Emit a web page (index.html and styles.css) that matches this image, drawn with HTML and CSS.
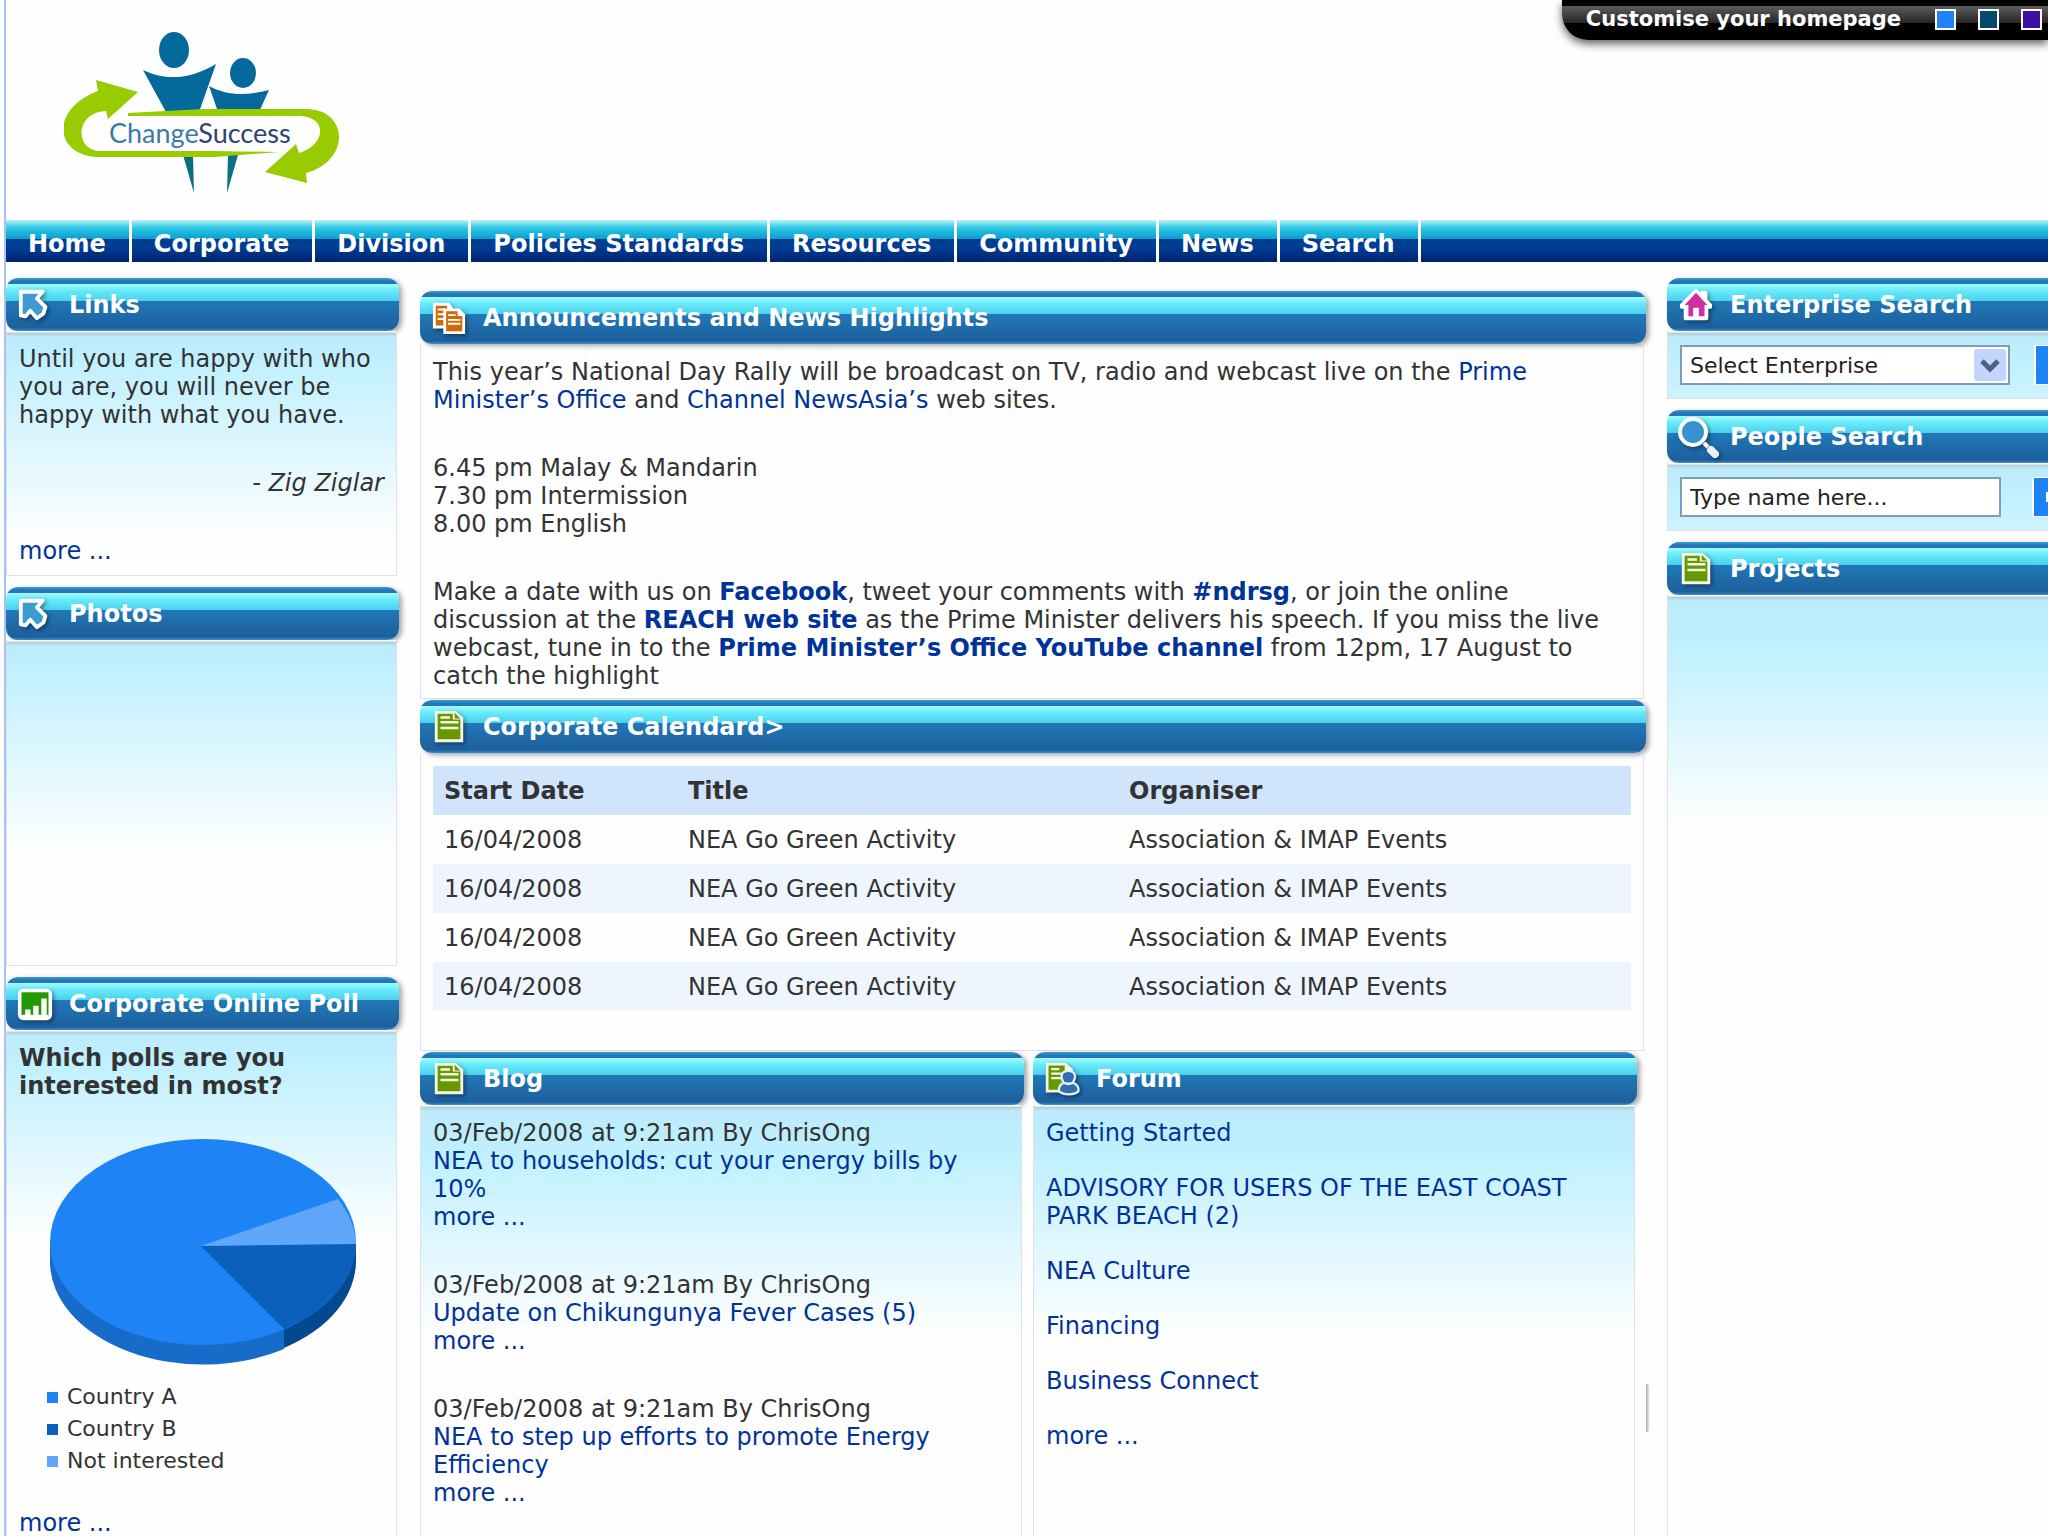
FILE: index.html
```html
<!DOCTYPE html>
<html lang="en">
<head>
<meta charset="utf-8">
<title>ChangeSuccess Intranet</title>
<link rel="stylesheet" href="styles.css">
</head>
<body>
<svg class="defs" width="0" height="0" aria-hidden="true">
  <symbol id="i-arrow" viewBox="0 0 36 38">
    <path d="M3 5H26L20 12L29 21L27 28L20 33L13 25L8 31L3 30Z" fill="#3d9bd0" stroke="#fff" stroke-width="4" stroke-linejoin="round"/>
  </symbol>
  <symbol id="i-doc" viewBox="0 0 36 38">
    <path d="M3 2H25L33 9V35H3Z" fill="#f4f8e8"/>
    <path d="M6 5H22V11H30V32H6Z" fill="#690"/>
    <path d="M24 4L30 10H24Z" fill="#690"/>
    <path d="M9 9H19M9 14H28M9 20H28" stroke="#f4f8e8" stroke-width="2.5"/>
  </symbol>
  <symbol id="i-news" viewBox="0 0 36 38">
    <path d="M1 3H18L22 8V30H1Z" fill="#fff"/>
    <path d="M4 6H16V11H20V27H4Z" fill="#d06a08"/>
    <path d="M6 10H14M6 15H14M6 20H14" stroke="#fff" stroke-width="2"/>
    <path d="M12 9H29L35 15V36H12Z" fill="#fff"/>
    <path d="M15 12H27V17H32V33H15Z" fill="#d06a08"/>
    <path d="M17 16H25M17 21H30M17 25H30" stroke="#fff" stroke-width="2"/>
  </symbol>
  <symbol id="i-poll" viewBox="0 0 40 38">
    <rect x="1" y="2" width="38" height="35" rx="6" fill="#fff"/>
    <path d="M5 6H35V32H5Z" fill="#290"/>
    <path d="M9 32V25H15V32ZM18 32V21H24V32ZM27 32V13H33V32Z" fill="#fff"/>
    <path d="M5 32H35" stroke="#fff" stroke-width="2"/>
  </symbol>
  <symbol id="i-home" viewBox="0 0 36 38">
    <path d="M18 4L3 19V21H7V33H29V21H33V19L28 14V6H24V10Z" fill="#fff" stroke="#fff" stroke-width="4" stroke-linejoin="round"/>
    <path d="M18 6L6 19H10V31H15V22H21V31H27V19H30Z" fill="#cf2f9f"/>
  </symbol>
  <symbol id="i-search" viewBox="0 0 44 44">
    <circle cx="17" cy="17" r="13" fill="#3593cf" stroke="#fff" stroke-width="4"/>
    <path d="M28 28L32 32" stroke="#fff" stroke-width="4"/>
    <path d="M35 35L39 39" stroke="#eaf0ff" stroke-width="8" stroke-linecap="round"/>
  </symbol>
  <symbol id="i-forum" viewBox="0 0 40 40">
    <path d="M2 2H24L32 9V35H2Z" fill="#f4f8e8"/>
    <path d="M5 5H23V32H5Z" fill="#690"/>
    <path d="M8 9H17M8 14H20M8 19H20" stroke="#f4f8e8" stroke-width="2.5"/>
    <path d="M22 24C17 17 20 11 27 11C34 11 37 17 32 24C38 26 39 31 38 34C33 38 22 38 17 34C16 31 17 26 22 24C25 26 29 26 32 24" fill="#2f6fae" stroke="#e4f0fa" stroke-width="2.5"/>
  </symbol>
</svg>

<div class="page">
  <header class="masthead">
    <a class="logo" href="#" aria-label="ChangeSuccess">
      <svg viewBox="0 0 280 170" width="280" height="170">
        <ellipse cx="110" cy="18" rx="15" ry="18" fill="#06699c"/>
        <ellipse cx="179" cy="41" rx="13" ry="15" fill="#06699c"/>
        <path d="M79 38C105 50 128 46 152 32L135 80H102Z" fill="#06699c"/>
        <path d="M145 54C165 65 185 63 205 58L195 80H154Z" fill="#06699c"/>
        <path d="M119 123H129L130 161ZM164 123H174L163 161Z" fill="#0b6f86"/>
        <path d="M32 48L74 60L44 87L42 79C12 80 10 116 34 119H150L215 120L150 125H32C-10 122 -14 77 34 59Z" fill="#9c0"/>
        <path d="M64 81L140 77H245C286 80 285 130 242 141L243 151L201 140L232 112L235 121C262 113 264 85 236 84H64Z" fill="#9c0"/>
        <text class="logo-text" x="45" y="111"><tspan class="logo-light">Change</tspan><tspan>Success</tspan></text>
      </svg>
    </a>
    <div class="customise">
      <span>Customise your homepage</span>
      <button class="swatch swatch-blue" aria-label="Blue theme"></button>
      <button class="swatch swatch-teal" aria-label="Teal theme"></button>
      <button class="swatch swatch-purple" aria-label="Purple theme"></button>
    </div>
  </header>

  <nav class="nav">
    <a href="#">Home</a><a href="#">Corporate</a><a href="#">Division</a><a href="#">Policies Standards</a><a href="#">Resources</a><a href="#">Community</a><a href="#">News</a><a href="#">Search</a>
  </nav>

  <div class="columns">
    <aside class="col">
      <section class="panel">
        <h2><svg class="icon"><use href="#i-arrow"/></svg>Links</h2>
        <div class="body tint">
          <p>Until you are happy with who you are, you will never be happy with what you have.</p>
          <p class="author">- Zig Ziglar</p>
          <p><a href="#">more ...</a></p>
        </div>
      </section>
      <section class="panel">
        <h2><svg class="icon"><use href="#i-arrow"/></svg>Photos</h2>
        <div class="body tint photos"></div>
      </section>
      <section class="panel fill">
        <h2><svg class="icon"><use href="#i-poll"/></svg>Corporate Online Poll</h2>
        <div class="body tint poll">
          <p class="question">Which polls are you interested in most?</p>
          <svg class="pie" viewBox="0 0 308 226" width="308" height="226" role="img" aria-label="Poll results">
            <path d="M1 103V122A153 103 0 0 0 235 210V190Z" fill="#176bc9"/>
            <path d="M307 103V122A153 103 0 0 1 235 209V189Z" fill="#04498f"/>
            <ellipse cx="154" cy="103" rx="153" ry="103" fill="#1e84f6"/>
            <path d="M152 107L235 190A153 103 0 0 0 307 104Z" fill="#0b60be"/>
            <path d="M152 107L289 60A153 103 0 0 1 307 105Z" fill="#5fa7fa"/>
          </svg>
          <ul class="legend">
            <li class="key-a">Country A</li>
            <li class="key-b">Country B</li>
            <li class="key-c">Not interested</li>
          </ul>
          <a href="#">more ...</a>
        </div>
      </section>
    </aside>

    <main class="main">
      <section class="panel">
        <h2><svg class="icon"><use href="#i-news"/></svg>Announcements and News Highlights</h2>
        <div class="body news">
          <p>This year’s National Day Rally will be broadcast on TV, radio and webcast live on the <a href="#">Prime Minister’s Office</a> and <a href="#">Channel NewsAsia’s</a> web sites.</p>
          <p>6.45 pm Malay &amp; Mandarin<br>7.30 pm Intermission<br>8.00 pm English</p>
          <p>Make a date with us on <a href="#"><b>Facebook</b></a>, tweet your comments with <a href="#"><b>#ndrsg</b></a>, or join the online discussion at the <a href="#"><b>REACH web site</b></a> as the Prime Minister delivers his speech. If you miss the live webcast, tune in to the <a href="#"><b>Prime Minister’s Office YouTube channel</b></a> from 12pm, 17 August to catch the highlight</p>
        </div>
      </section>
      <section class="panel">
        <h2><svg class="icon"><use href="#i-doc"/></svg>Corporate Calendard&gt;</h2>
        <div class="body calendar">
          <table>
            <thead><tr><th class="c-date">Start Date</th><th class="c-title">Title</th><th>Organiser</th></tr></thead>
            <tbody>
              <tr><td>16/04/2008</td><td>NEA Go Green Activity</td><td>Association &amp; IMAP Events</td></tr>
              <tr><td>16/04/2008</td><td>NEA Go Green Activity</td><td>Association &amp; IMAP Events</td></tr>
              <tr><td>16/04/2008</td><td>NEA Go Green Activity</td><td>Association &amp; IMAP Events</td></tr>
              <tr><td>16/04/2008</td><td>NEA Go Green Activity</td><td>Association &amp; IMAP Events</td></tr>
            </tbody>
          </table>
        </div>
      </section>
      <div class="pair">
        <section class="panel fill">
          <h2><svg class="icon"><use href="#i-doc"/></svg>Blog</h2>
          <div class="body tint tall">
            <p>03/Feb/2008 at 9:21am By ChrisOng<br><a href="#">NEA to households: cut your energy bills by 10%</a><br><a href="#">more ...</a></p>
            <p>03/Feb/2008 at 9:21am By ChrisOng<br><a href="#">Update on Chikungunya Fever Cases (5)</a><br><a href="#">more ...</a></p>
            <p>03/Feb/2008 at 9:21am By ChrisOng<br><a href="#">NEA to step up efforts to promote Energy Efficiency</a><br><a href="#">more ...</a></p>
          </div>
        </section>
        <section class="panel fill">
          <h2><svg class="icon"><use href="#i-forum"/></svg>Forum</h2>
          <div class="body tint tall topics">
            <a href="#">Getting Started</a>
            <a href="#">ADVISORY FOR USERS OF THE EAST COAST PARK BEACH (2)</a>
            <a href="#">NEA Culture</a>
            <a href="#">Financing</a>
            <a href="#">Business Connect</a>
            <a href="#">more ...</a>
          </div>
        </section>
      </div>
    </main>

    <aside class="col side">
      <section class="panel">
        <h2><svg class="icon"><use href="#i-home"/></svg>Enterprise Search</h2>
        <div class="body tint form">
          <select aria-label="Enterprise"><option>Select Enterprise</option></select>
          <button class="go" aria-label="Go"></button>
        </div>
      </section>
      <section class="panel">
        <h2><svg class="icon icon-lg"><use href="#i-search"/></svg>People Search</h2>
        <div class="body tint form people">
          <input type="text" value="Type name here..." aria-label="Name">
          <button class="go" aria-label="Go"></button>
        </div>
      </section>
      <section class="panel fill">
        <h2><svg class="icon"><use href="#i-doc"/></svg>Projects</h2>
        <div class="body tint tall"></div>
      </section>
    </aside>
  </div>
</div>
</body>
</html>
```
FILE: styles.css
```css
* { box-sizing: border-box; }

body {
  margin: 0;
  background: #fefefe;
  color: #333;
  font: 24px/28px Verdana, "DejaVu Sans", sans-serif;
}

a { color: #039; text-decoration: none; }
p { margin: 0 0 40px; }
p:last-child { margin-bottom: 0; }
.defs { position: absolute; }

.page {
  display: flex;
  flex-direction: column;
  min-height: 100vh;
  margin-left: 4px;
  border-left: 2px solid #a4c4f4;
  overflow: hidden;
}

/* Masthead */
.masthead {
  display: flex;
  justify-content: space-between;
  align-items: flex-start;
  height: 220px;
}
.logo { margin: 32px 0 0 58px; }
.logo svg { display: block; }
.logo-text { font: 27px Lato, sans-serif; fill: #2c4470; }
.logo-light { fill: #3c79a8; }

.customise {
  display: flex;
  align-items: center;
  gap: 22px;
  height: 40px;
  padding: 0 6px 2px 24px;
  border-bottom-left-radius: 26px;
  background: linear-gradient(#000 6px, #5c5c5c 6px, #262626 23px, #000 23px);
  box-shadow: 0 4px 8px rgba(0, 0, 0, .6);
  color: #fff;
  font-size: 21px;
  font-weight: bold;
}
.customise span { margin-right: 12px; }
.swatch {
  width: 21px;
  height: 21px;
  padding: 0;
  border: 2px solid #fff;
}
.swatch-blue { background: #1e84f6; }
.swatch-teal { background: #044a6c; }
.swatch-purple { background: #3d0fa3; }

/* Main navigation */
.nav {
  display: flex;
  height: 42px;
  background: linear-gradient(#b4f4fa, #2cc8e4 8px, #0a9cd0 19px, #003a86 19px, #00409a 26px, #00246c);
}
.nav a {
  padding: 0 23px 0 22px;
  border-right: 3px solid #fff;
  color: #fff;
  font-weight: bold;
  line-height: 48px;
}

/* Columns */
.columns {
  flex: 1;
  display: grid;
  grid-template-columns: 393fr 1226fr 381fr;
  gap: 21px;
  padding-top: 16px;
}
.col, .main { display: flex; flex-direction: column; min-width: 0; }
.col { gap: 11px; }
.main { gap: 1px; padding-top: 13px; }
.pair {
  position: relative;
  flex: 1;
  display: grid;
  grid-template-columns: 1fr 1fr;
  gap: 9px;
  padding-right: 9px;
}
.pair::after {
  content: "";
  position: absolute;
  top: 332px;
  right: -4px;
  width: 4px;
  height: 48px;
  border-radius: 0 4px 4px 0;
  background: linear-gradient(90deg, #aaa, #fefefe);
}

/* Panels */
.panel { display: flex; flex-direction: column; min-width: 0; }
.fill { flex: 1; }
.panel h2 {
  display: flex;
  align-items: center;
  gap: 16px;
  height: 53px;
  margin: 0;
  padding-left: 11px;
  border-radius: 12px;
  background: linear-gradient(#3c9cd0, #2377b8 3px, #2377b8 6px, #a4fcff 6px, #6cecfc 12px, #48d0ec 23px, #2278b8 23px, #1c609c 50px, #3c90cc);
  box-shadow: 3px 2px 5px rgba(0, 0, 0, .35);
  color: #fff;
  font-size: 24px;
  line-height: 28px;
  white-space: nowrap;
}
.icon {
  flex: none;
  width: 36px;
  height: 36px;
  filter: drop-shadow(2px 2px 2px rgba(0, 0, 0, .4));
}
.icon-lg { width: 44px; height: 44px; margin: 0 -6px 0 -2px; }

.body {
  flex: 1;
  margin-right: 2px;
  padding: 14px 12px 10px;
  border: solid #e0e0e4;
  border-width: 0 1px 1px;
}
.tint { background: linear-gradient(#fff 1px, #b4ccd4 2px, #bcecfc 6px, #c0f0ff 30px, #fefefe 210px); }
.tall { background: linear-gradient(#fff 1px, #b4ccd4 2px, #bcecfc 6px, #c0f0ff 50px, #fefefe 230px); }
.news { padding-right: 24px; padding-bottom: 8px; }
.fill > .body { border-bottom: 0; padding-bottom: 0; }
.author { text-align: right; font-style: italic; }
.photos { min-height: 326px; }

.poll { display: flex; flex-direction: column; }
.poll .question { margin-bottom: 39px; font-weight: bold; }
.pie { margin-left: 30px; }
.legend {
  margin: 16px 0 32px 28px;
  padding: 0;
  list-style: none;
  font-size: 22px;
  line-height: 32px;
}
.legend li { display: flex; align-items: center; gap: 9px; }
.legend li::before { content: ""; width: 11px; height: 11px; }
.key-a::before { background: #1e84f6; }
.key-b::before { background: #0b60be; }
.key-c::before { background: #5fa7fa; }

/* Calendar */
.calendar { padding-top: 13px; padding-bottom: 39px; }
table { width: 100%; border-collapse: collapse; table-layout: fixed; }
th, td { height: 49px; padding: 0 11px; text-align: left; }
th { background: #d0e4fc; }
.c-date { width: 244px; }
.c-title { width: 441px; }
tbody tr:nth-child(even) { background: #eff5fe; }

.topics { display: flex; flex-direction: column; gap: 27px; }

/* Search column */
.side h2, .side .body { border-top-right-radius: 0; border-bottom-right-radius: 0; margin-right: 0; border-right: 0; }
.form { display: flex; gap: 24px; padding: 14px 0 13px 12px; }
.people { gap: 31px; }
.form select, .form input {
  flex: 1;
  min-width: 0;
  height: 40px;
  padding: 0 8px;
  border: 2px solid #7f9db9;
  border-radius: 0;
  background: #fff;
  color: #222;
  font: 22px Verdana, "DejaVu Sans", sans-serif;
}
.form select {
  appearance: none;
  background: url("data:image/svg+xml,%3Csvg xmlns='http://www.w3.org/2000/svg' width='32' height='32'%3E%3Crect width='32' height='32' rx='3' fill='%23c4d4fc'/%3E%3Cpath d='M8 12l8 8 8-8' fill='none' stroke='%234d6185' stroke-width='5'/%3E%3C/svg%3E") right 2px center no-repeat #fff;
}
.go {
  flex: none;
  width: 14px;
  height: 40px;
  padding: 0;
  border: solid #fff;
  border-width: 1px 0 1px 2px;
  background: #1e84f6;
}
.people .go {
  width: 16px;
  background: linear-gradient(#fff, #fff) right center / 2px 10px no-repeat #1e84f6;
}
```
